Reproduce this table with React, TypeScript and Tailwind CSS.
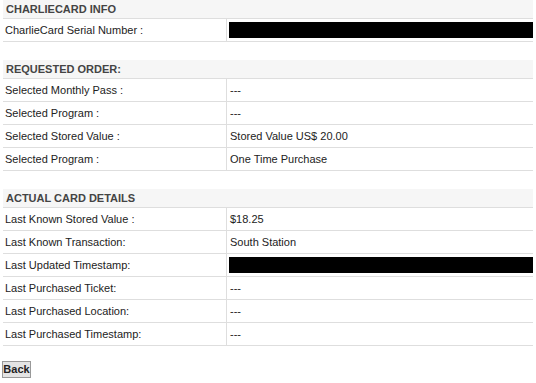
const sections = [
  {
    title: "CHARLIECARD INFO",
    rows: [{ label: "CharlieCard Serial Number :", value: null }],
  },
  {
    title: "REQUESTED ORDER:",
    rows: [
      { label: "Selected Monthly Pass :", value: "---" },
      { label: "Selected Program :", value: "---" },
      { label: "Selected Stored Value :", value: "Stored Value US$ 20.00" },
      { label: "Selected Program :", value: "One Time Purchase" },
    ],
  },
  {
    title: "ACTUAL CARD DETAILS",
    rows: [
      { label: "Last Known Stored Value :", value: "$18.25" },
      { label: "Last Known Transaction:", value: "South Station" },
      { label: "Last Updated Timestamp:", value: null },
      { label: "Last Purchased Ticket:", value: "---" },
      { label: "Last Purchased Location:", value: "---" },
      { label: "Last Purchased Timestamp:", value: "---" },
    ],
  },
]

export default function App() {
  return (
    <div className="min-h-[383px] bg-white px-[3px] text-[11px] text-[#222] font-['Liberation_Sans',Arial,sans-serif]">
      <div className="flex flex-col gap-[18px]">
        {sections.map((s) => (
          <div key={s.title}>
            <div className="h-[19px] bg-[#f6f6f6] border-b border-[#dedede] pl-[3px] flex items-center font-bold text-[#444] text-[11px]">
              {s.title}
            </div>
            {s.rows.map((r, i) => (
              <div key={i} className="grid grid-cols-[224px_1fr] h-[23px] border-b border-[#dedede]">
                <div className="flex items-center pl-[2px] border-r border-[#dedede]">{r.label}</div>
                <div className="flex items-center pl-[2px]">
                  {r.value === null ? (
                    <div className="h-[16px] w-full bg-black" />
                  ) : (
                    <span className="pl-[1px]">{r.value}</span>
                  )}
                </div>
              </div>
            ))}
          </div>
        ))}
      </div>
      <div className="mt-[15px] -ml-[1px]">
        <button className="h-[17px] w-[29px] bg-[#e4e4e4] border border-[#999] font-bold text-[11px] text-[#222] leading-none">
          Back
        </button>
      </div>
    </div>
  )
}
